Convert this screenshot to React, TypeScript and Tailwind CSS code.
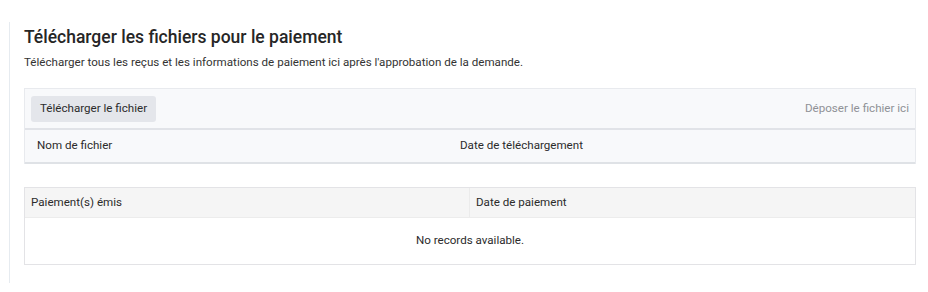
import React from "react";

const font = { fontFamily: "Roboto, 'Noto Sans', sans-serif" };

const UploadBox = () => (
  <div className="border border-b-0 border-[#e8eaee] bg-[#f8f9fb]">
    {/* toolbar */}
    <div className="flex h-[41px] items-center justify-between border-b-2 border-[#e1e3e8] pl-[6px] pr-[6px]">
      <button
        type="button"
        className="h-[26px] rounded-[3px] bg-[#e4e6eb] px-[9px] text-[11.6px] text-[#2b2b2b]"
      >
        Télécharger le fichier
      </button>
      <span className="text-[11.6px] text-[#8f9196]">Déposer le fichier ici</span>
    </div>
    {/* header */}
    <div className="flex h-[34px] items-center border-b-2 border-[#dfe2e6] text-[11.6px] text-[#2b2b2b]">
      <div className="w-[435px] pl-[12px]">Nom de fichier</div>
      <div>Date de téléchargement</div>
    </div>
  </div>
);

const PaymentsTable = () => (
  <div className="border border-[#e3e3e6] text-[11.6px] text-[#2b2b2b]">
    <div className="flex h-[30px] bg-[#f5f5f5] border-b border-[#ececec]">
      <div className="flex w-[445px] items-center border-r border-[#ebebeb] pl-[6px]">
        Paiement(s) émis
      </div>
      <div className="flex flex-1 items-center pl-[6px]">Date de paiement</div>
    </div>
    <div className="flex h-[46px] items-center justify-center bg-white">
      No records available.
    </div>
  </div>
);

export default function App() {
  return (
    <div className="h-[292px] w-[928px] bg-white pt-[22px] pr-[12px]" style={font}>
      <div className="ml-[9px] h-[261px] border-l border-[#e6ebf0] pl-[14px]">
        <h2 className="pt-[3px] text-[17.5px] font-medium leading-[24px] text-[#262626]">
          Télécharger les fichiers pour le paiement
        </h2>
        <p className="mt-[5px] text-[11.6px] leading-[16px] text-[#333]">
          Télécharger tous les reçus et les informations de paiement ici après l'approbation de la demande.
        </p>
        <div className="mt-[18px]">
          <UploadBox />
        </div>
        <div className="mt-[23px]">
          <PaymentsTable />
        </div>
      </div>
    </div>
  );
}
